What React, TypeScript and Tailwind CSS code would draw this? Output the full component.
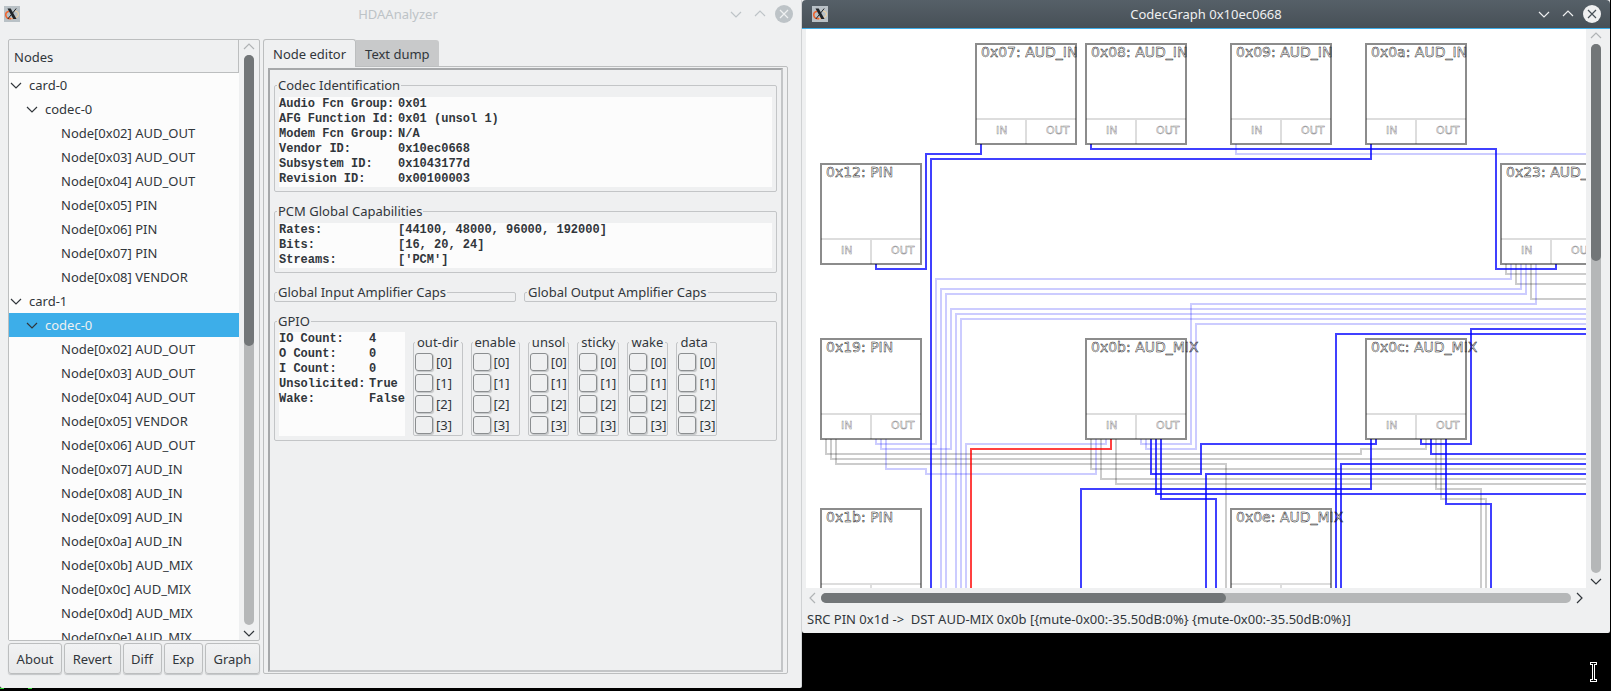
import { useState } from "react";
import clsx from "clsx";

type Row = { label: string; depth: number };

const rows: Row[] = [
  { label: "card-0", depth: 0 },
  { label: "codec-0", depth: 1 },
  { label: "Node[0x02] AUD_OUT", depth: 2 },
  { label: "Node[0x03] AUD_OUT", depth: 2 },
  { label: "Node[0x04] AUD_OUT", depth: 2 },
  { label: "Node[0x05] PIN", depth: 2 },
  { label: "Node[0x06] PIN", depth: 2 },
  { label: "Node[0x07] PIN", depth: 2 },
  { label: "Node[0x08] VENDOR", depth: 2 },
  { label: "card-1", depth: 0 },
  { label: "codec-0", depth: 1 },
  { label: "Node[0x02] AUD_OUT", depth: 2 },
  { label: "Node[0x03] AUD_OUT", depth: 2 },
  { label: "Node[0x04] AUD_OUT", depth: 2 },
  { label: "Node[0x05] VENDOR", depth: 2 },
  { label: "Node[0x06] AUD_OUT", depth: 2 },
  { label: "Node[0x07] AUD_IN", depth: 2 },
  { label: "Node[0x08] AUD_IN", depth: 2 },
  { label: "Node[0x09] AUD_IN", depth: 2 },
  { label: "Node[0x0a] AUD_IN", depth: 2 },
  { label: "Node[0x0b] AUD_MIX", depth: 2 },
  { label: "Node[0x0c] AUD_MIX", depth: 2 },
  { label: "Node[0x0d] AUD_MIX", depth: 2 },
  { label: "Node[0x0e] AUD_MIX", depth: 2 },
];

const indents = ["pl-px", "pl-[17px]", "pl-[52px]"];

const identification = [
  ["Audio Fcn Group:", "0x01"],
  ["AFG Function Id:", "0x01 (unsol 1)"],
  ["Modem Fcn Group:", "N/A"],
  ["Vendor ID:", "0x10ec0668"],
  ["Subsystem ID:", "0x1043177d"],
  ["Revision ID:", "0x00100003"],
];

const pcm = [
  ["Rates:", "[44100, 48000, 96000, 192000]"],
  ["Bits:", "[16, 20, 24]"],
  ["Streams:", "['PCM']"],
];

const gpio = [
  ["IO Count:", "4"],
  ["O Count:", "0"],
  ["I Count:", "0"],
  ["Unsolicited:", "True"],
  ["Wake:", "False"],
];

const gpioGroups = ["out-dir", "enable", "unsol", "sticky", "wake", "data"];

const nodes = [
  { x: 170, y: 15, label: "0x07: AUD_IN" },
  { x: 280, y: 15, label: "0x08: AUD_IN" },
  { x: 425, y: 15, label: "0x09: AUD_IN" },
  { x: 560, y: 15, label: "0x0a: AUD_IN" },
  { x: 15, y: 135, label: "0x12: PIN" },
  { x: 695, y: 135, label: "0x23: AUD_IN" },
  { x: 15, y: 310, label: "0x19: PIN" },
  { x: 280, y: 310, label: "0x0b: AUD_MIX" },
  { x: 560, y: 310, label: "0x0c: AUD_MIX" },
  { x: 15, y: 480, label: "0x1b: PIN" },
  { x: 425, y: 480, label: "0x0e: AUD_MIX" },
];

// inactive routes
const greyWires = [
  "M700 235V245H780",
  "M710 235V255H780",
  "M725 235V270H780",
  "M20 410V425H555V420H620V410",
  "M25 410V430H780",
  "M30 410V435H420V559",
  "M285 410V440H780",
  "M295 410V450H780",
  "M310 410V455H780",
  "M630 410V460H675V559",
  "M635 410V470H680V559",
];

const paleWires = [
  "M430 115V125H780",
  "M705 235V250H130V415H70V410",
  "M715 235V260H135V559",
  "M720 235V265H140V559",
  "M730 235V275H385V415H335V410",
  "M780 280H145V420H75V410",
  "M780 285H150V559",
  "M780 290H155V559",
  "M780 295H390V420H340V410",
  "M80 410V440H120V445H290V410",
  "M160 559V415H300V410",
];

// active routes
const blueWires = [
  "M175 115V125H120V240H70V235",
  "M285 115V120H690V240H750V235",
  "M565 115V130H125V559",
  "M780 300H665V415H615V410",
  "M780 305H530V559",
  "M275 559V460H565V410",
  "M345 410V445H395V415H570V410",
  "M350 410V465H780",
  "M355 410V470H410V559",
  "M400 559V445H780",
  "M625 410V425H780",
  "M535 559V435H780",
  "M640 410V475H685V559",
];

const arrowPaths = {
  down: "M1 4l5 5l5-5",
  up: "M1 8l5-5l5 5",
  left: "M8 1l-5 5l5 5",
  right: "M4 1l5 5l-5 5",
};

function Arrow({ dir, className }: { dir: keyof typeof arrowPaths; className?: string }) {
  return (
    <svg viewBox="0 0 12 12" className={clsx("size-3 shrink-0", className)} fill="none" stroke="currentColor" strokeWidth="1.2">
      <path d={arrowPaths[dir]} />
    </svg>
  );
}

function XLogo() {
  return (
    <svg viewBox="0 0 16 16" className="size-4 shrink-0">
      <rect width="16" height="16" fill="#b9c1c6" />
      <path d="M5 5.200C2.600 5.800 1.500 7.400 1.800 9.300c.4 2.200 2.600 3.500 5.200 3.300" fill="none" stroke="#f0652f" strokeWidth="1.600" />
      <path d="M7 12.600c2 .1 3.800-.3 5-1.100" fill="none" stroke="#f3a46c" strokeWidth="1.400" />
      <path d="M11 5c2.400.4 3.600 1.700 3.400 3.700-.1 1.200-.9 2.200-2.400 2.800" fill="none" stroke="#ecd0a4" strokeWidth="1.200" />
      <path d="M3.500 2.500h3.200l5.800 10.500H9.300z" fill="#1f2326" />
      <path d="M12.200 2.500L3.800 13" stroke="#1f2326" strokeWidth="1" />
    </svg>
  );
}

function TitleBar({ title, active }: { title: string; active?: boolean }) {
  return (
    <header
      className={clsx(
        "flex h-[29px] shrink-0 items-center pb-px",
        active
          ? "rounded-t-sm border-b border-[#3daee9] bg-linear-to-b from-[#566068] to-[#475057] pr-[9px] pl-[10px] text-[#eff0f1]"
          : "pr-2 pl-1 text-[#bdc3c7]"
      )}
    >
      <XLogo />
      <h1 className="flex-1 pl-[46px] text-center">{title}</h1>
      <div className="flex items-center gap-3">
        <button aria-label="Minimize"><Arrow dir="down" /></button>
        <button aria-label="Maximize"><Arrow dir="up" /></button>
        <button aria-label="Close" className="-ml-[3px]">
          <svg viewBox="0 0 18 18" className="size-[18px]">
            <circle cx="9" cy="9" r="9" fill="currentColor" />
            <path d="M5 5l8 8M13 5l-8 8" stroke={active ? "#475057" : "#eff0f1"} strokeWidth="1.2" />
          </svg>
        </button>
      </div>
    </header>
  );
}

function Group({ title, className, children }: { title: string; className?: string; children?: React.ReactNode }) {
  return (
    <fieldset className={clsx("min-w-0 rounded-xs border border-[#c3c5c7] px-1", className)}>
      <legend className="-ml-0.5 px-px leading-[18px]">{title}</legend>
      {children}
    </fieldset>
  );
}

function Facts({ items, className }: { items: string[][]; className: string }) {
  return (
    <dl className={clsx("grid content-start bg-[#fcfcfc] font-['Liberation_Mono',monospace] text-xs leading-[15px] font-bold whitespace-pre", className)}>
      {items.map(([k, v]) => (
        <div key={k} className="contents">
          <dt>{k}</dt>
          <dd>{v}</dd>
        </div>
      ))}
    </dl>
  );
}

function NodeTree() {
  const [selected, setSelected] = useState(10);

  return (
    <div className="flex min-h-0 flex-1 rounded-xs border border-[#bcbebf]">
      <div className="flex min-w-0 flex-1 flex-col">
        <div className="flex h-[33px] shrink-0 items-center border-r border-b border-[#bcbebf] pt-px pl-[5px]">Nodes</div>
        <ul className="min-h-0 flex-1 overflow-hidden bg-[#fcfcfc]">
          {rows.map((row, i) => (
            <li key={i}>
              <button
                onClick={() => setSelected(i)}
                className={clsx(
                  "flex h-6 w-full items-center gap-[7px] text-left",
                  indents[row.depth],
                  i === selected && "bg-[#3daee9]"
                )}
              >
                {row.depth < 2 && <Arrow dir="down" className="text-[#31363b]" />}
                <span className={clsx(i === selected && "text-[#eff0f1]")}>{row.label}</span>
              </button>
            </li>
          ))}
        </ul>
      </div>
      <div className="flex w-5 flex-col items-center gap-[2px] py-[1px]">
        <button aria-label="Scroll up"><Arrow dir="up" className="text-[#b0b3b5]" /></button>
        <div className="w-[10px] flex-1 rounded-full bg-[#b5b7b8]">
          <div className="h-[51%] rounded-full bg-[#727678]" />
        </div>
        <button aria-label="Scroll down"><Arrow dir="down" /></button>
      </div>
    </div>
  );
}

function NodeEditor() {
  return (
    <div className="flex flex-1 flex-col gap-[10px] border-2 border-t-[#a6a8aa] border-r-[#c3c5c7] border-b-[#c3c5c7] border-l-[#a6a8aa] px-1 pt-[6px]">
      <Group title="Codec Identification" className="pt-[3px] pb-1">
        <Facts items={identification} className="grid-cols-[119px_1fr]" />
      </Group>
      <Group title="PCM Global Capabilities" className="pt-[3px] pb-1">
        <Facts items={pcm} className="grid-cols-[119px_1fr]" />
      </Group>
      <div className="grid grid-cols-[242fr_253fr] gap-2">
        <Group title="Global Input Amplifier Caps" />
        <Group title="Global Output Amplifier Caps" />
      </div>
      <Group title="GPIO" className="pt-[2px] pb-1">
        <div className="flex gap-2">
          <Facts items={gpio} className="h-[104px] w-[126px] grid-cols-[90px_1fr]" />
          {gpioGroups.map((name) => (
            <fieldset key={name} className="mt-px h-[103px] rounded-xs border border-[#c3c5c7] px-px pt-[2px]">
              <legend className="px-[2px] leading-[18px]">{name}</legend>
              <div className="flex flex-col gap-[3px]">
                {[0, 1, 2, 3].map((n) => (
                  <label key={n} className="flex h-[18px] items-center gap-[3px]">
                    <input
                      type="checkbox"
                      className="size-[18px] appearance-none rounded-[3px] border border-[#8b8e90] shadow-[1px_1px_1px_#c3c5c7] checked:bg-[#3daee9]"
                    />
                    [{n}]
                  </label>
                ))}
              </div>
            </fieldset>
          ))}
        </div>
      </Group>
    </div>
  );
}

function GraphNode({ x, y, label }: { x: number; y: number; label: string }) {
  return (
    <g fill="none">
      <path d={`M${x} ${y + 75}h100M${x + 50} ${y + 75}v25`} stroke="#ddd" strokeWidth="2" />
      <rect x={x} y={y} width="100" height="100" stroke="#000" strokeOpacity="0.45" strokeWidth="2" />
      <g className="font-['DejaVu_Sans',sans-serif]" stroke="#000">
        <text x={x + 5} y={y + 13} fontSize="14" strokeWidth="0.5" strokeOpacity="0.9">{label}</text>
        <text x={x + 20} y={y + 90} fontSize="11" strokeWidth="0.5" strokeOpacity="0.5">IN</text>
        <text x={x + 70} y={y + 90} fontSize="11" strokeWidth="0.5" strokeOpacity="0.5">OUT</text>
      </g>
    </g>
  );
}

function CodecGraph() {
  return (
    <svg className="h-[559px] min-w-0 flex-1 bg-white" fill="none" strokeWidth="2">
      {greyWires.map((d) => <path key={d} d={d} stroke="#000" strokeOpacity="0.2" />)}
      {paleWires.map((d) => <path key={d} d={d} stroke="#00f" strokeOpacity="0.2" />)}
      {blueWires.map((d) => <path key={d} d={d} stroke="#00f" strokeOpacity="0.75" />)}
      <path d="M165 559V420H305V410" stroke="#f00" strokeOpacity="0.75" />
      {nodes.map((n) => <GraphNode key={n.label} {...n} />)}
    </svg>
  );
}

export default function App() {
  return (
    <div className="relative grid min-h-screen grid-cols-[802fr_809fr] items-start overflow-hidden bg-black font-['Noto_Sans',sans-serif] text-[13px] leading-5 text-[#31363b]">
      <section className="flex h-[calc(100vh-3px)] flex-col rounded-b-xs border-r border-[#d0d2d4] bg-[#eff0f1]">
        <TitleBar title="HDAAnalyzer" />
        <div className="flex min-h-0 flex-1 gap-[3px] pt-[10px] pr-[13px] pb-[14px] pl-2">
          <div className="flex w-[252px] flex-col gap-[2px]">
            <NodeTree />
            <div className="flex gap-[2px]">
              {["About", "Revert", "Diff", "Exp", "Graph"].map((b) => (
                <button
                  key={b}
                  className="h-[31px] flex-auto rounded-[3px] border border-[#bcbebf] bg-linear-to-b from-[#f1f2f3] to-[#e8e9ea] shadow-[0_1px_1px_#c3c5c7]"
                >
                  {b}
                </button>
              ))}
            </div>
          </div>
          <div className="flex min-w-0 flex-1 flex-col">
            <div role="tablist" className="flex items-end">
              <button role="tab" aria-selected="true" className="relative -mb-px h-7 rounded-t-[3px] border border-b-0 border-[#bcbebf] bg-[#eff0f1] px-[9px]">
                Node editor
              </button>
              <button role="tab" aria-selected="false" className="h-[26px] rounded-tr-[3px] bg-[#c8c9ca] px-[9px] pt-px">
                Text dump
              </button>
            </div>
            <div className="flex flex-1 flex-col rounded-b-xs rounded-tr-xs border border-[#bcbebf] p-1 pt-px pb-px">
              <NodeEditor />
            </div>
          </div>
        </div>
      </section>

      <section className="mr-px flex flex-col rounded-b-xs bg-[#eff0f1]">
        <TitleBar title="CodecGraph 0x10ec0668" active />
        <div className="flex px-1">
          <CodecGraph />
          <div className="flex w-5 flex-col items-center gap-[2px] py-[1px]">
            <button aria-label="Scroll up"><Arrow dir="up" className="text-[#b0b3b5]" /></button>
            <div className="w-[10px] flex-1 rounded-full bg-[#b5b7b8]">
              <div className="h-[41%] rounded-full bg-[#727678]" />
            </div>
            <button aria-label="Scroll down"><Arrow dir="down" /></button>
          </div>
        </div>
        <div className="flex h-5 items-center gap-[2px] pr-[25px] pl-[5px]">
          <button aria-label="Scroll left"><Arrow dir="left" className="text-[#b0b3b5]" /></button>
          <div className="h-[10px] flex-1 rounded-full bg-[#b5b7b8]">
            <div className="h-full w-[54%] rounded-full bg-[#727678]" />
          </div>
          <button aria-label="Scroll right"><Arrow dir="right" /></button>
        </div>
        <p className="h-[25px] pl-[5px] leading-[22px] whitespace-pre">
          {"SRC PIN 0x1d ->  DST AUD-MIX 0x0b [{mute-0x00:-35.50dB:0%} {mute-0x00:-35.50dB:0%}]"}
        </p>
      </section>

      {/* text cursor over the desktop */}
      <svg viewBox="0 0 9 20" className="absolute right-[13px] bottom-[9px] h-5 w-[9px]" fill="none">
        <path d="M1 1.500h7M1 18.500h7M4.500 2v16" stroke="#fff" strokeWidth="3" />
        <path d="M2 1.500h5M2 18.500h5M4.500 2v16" stroke="#000" />
      </svg>
      {/* terminal text showing under the window edge */}
      <svg className="absolute bottom-[2px] left-0 h-px w-9">
        <path d="M0 .5h4M28 .5h4" stroke="#2fd12f" />
      </svg>
    </div>
  );
}
